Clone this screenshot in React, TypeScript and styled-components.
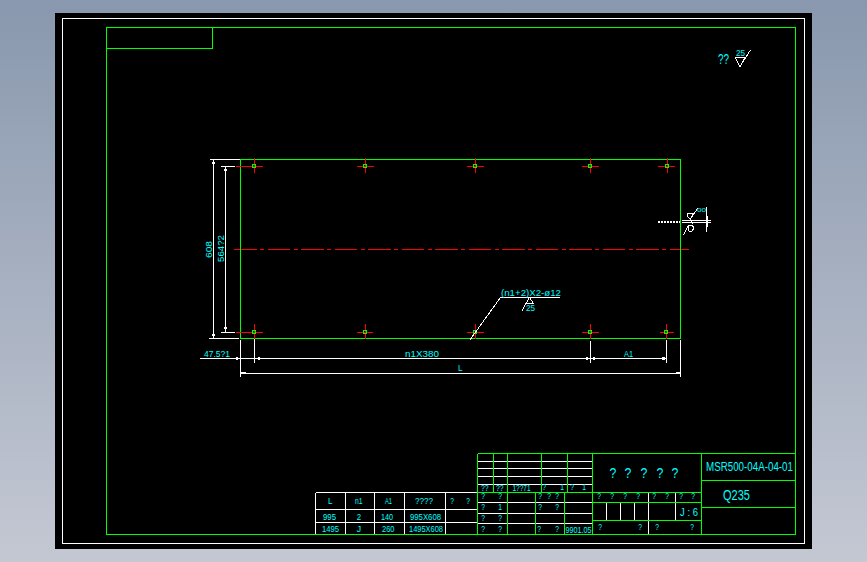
import styled, { createGlobalStyle } from "styled-components";

const GlobalStyle = createGlobalStyle`
  html, body {
    margin: 0;
    padding: 0;
    height: 100%;
  }
  #root {
    height: 100%;
  }
`;

const CYAN = "#00ffff";
const GREEN = "#00ff00";
const WHITE = "#ffffff";
const RED = "#ff0000";

// Grey-blue desktop gradient behind the drawing sheet
const Page = styled.div`
  box-sizing: border-box;
  height: 100%;
  padding: 13px 55px;
  background: linear-gradient(180deg, #8998ae 0%, #c4c8d3 100%);
`;

const Sheet = styled.div`
  width: 757px;
  height: 536px;
  background: #000;
`;

const Drawing = styled.svg`
  display: block;
`;

const Ink = styled.path<{ $c: string; $w?: number }>`
  fill: none;
  stroke: ${(p) => p.$c};
  stroke-width: ${(p) => p.$w ?? 1}px;
  shape-rendering: crispEdges;
`;

const CadText = styled.text`
  fill: ${CYAN};
  font-family: "Liberation Sans", sans-serif;
`;

type LabelProps = {
  x: number;
  y: number;
  t: string;
  w?: number;
  h?: number;
  rotate?: boolean;
};

// x is the left edge when a width is given, otherwise the centre of a single glyph
function Label({ x, y, t, w, h = 6, rotate }: LabelProps) {
  const width = w ?? h * 0.62;
  const left = w ? x : x - width / 2;
  return (
    <CadText
      x={left}
      y={y}
      fontSize={h / 0.72}
      textLength={width}
      lengthAdjust="spacingAndGlyphs"
      transform={rotate ? `rotate(-90 ${x} ${y})` : undefined}
    >
      {t}
    </CadText>
  );
}

const holes = [
  { x: 254, y: 166, l: 18, r: 9 },
  { x: 365, y: 166, l: 8, r: 9 },
  { x: 475, y: 166, l: 8, r: 9 },
  { x: 590, y: 166, l: 8, r: 9 },
  { x: 667, y: 166, l: 9, r: 8 },
  { x: 254, y: 332, l: 18, r: 9 },
  { x: 365, y: 332, l: 8, r: 8 },
  { x: 475, y: 332, l: 8, r: 9 },
  { x: 590, y: 332, l: 8, r: 9 },
  { x: 666, y: 332, l: 6, r: 8 },
];

function Hole({ x, y, l, r }: { x: number; y: number; l: number; r: number }) {
  return (
    <>
      <Ink $c={RED} d={`M${x - l} ${y + 0.5}H${x + r}M${x + 0.5} ${y - 8}V${y + 7}`} />
      <Ink $c={GREEN} d={`M${x - 1.5} ${y - 1.5}h3v3h-3z`} />
    </>
  );
}

// Small question marks of the title block, as x/baseline pairs
const marks: [number, number, string][] = [
  [544, 490, "?"], [562, 490, "1"], [572, 490, "?"], [584, 490, "1"],
  [483, 499, "?"], [500, 499, "?"], [540, 499, "?"], [549, 499, "?"], [557, 499, "?"],
  [483, 510, "?"], [500, 510, "1"], [540, 510, "?"], [557, 510, "?"],
  [483, 521, "?"], [500, 521, "?"],
  [483, 532, "?"], [500, 532, "?"], [539, 532, "?"], [557, 532, "?"],
  [599, 499, "?"], [612, 499, "?"], [625, 499, "?"], [638, 499, "?"],
  [654, 499, "?"], [667, 499, "?"], [681, 499, "?"], [693, 499, "?"],
  [600, 530, "?"], [640, 530, "?"], [657, 530, "?"], [692, 530, "?"],
  [452, 504, "?"], [468, 504, "?"],
];

export default function App() {
  return (
    <Page>
      <GlobalStyle />
      <Sheet>
        <Drawing width={757} height={536} viewBox="55 13 757 536">
          {/* sheet frames */}
          <Ink $c={WHITE} d="M62.5 18.5H804.5V543.5H62.5Z" />
          <Ink $c={GREEN} d="M106.5 27.5H795.5V534.5H106.5Z M106.5 48.5H212.5V27.5" />

          {/* centre line */}
          <Ink $c={RED} strokeDasharray="22.5 3.5 4 3.5" d="M234 249.5H689" />

          {/* dimension lines */}
          <Ink
            $c={WHITE}
            d="M210 159.5H240 M213.5 159.5V338 M209 338.5H239 M221 166.5H235 M221 332.5H235 M225.5 166.5V332
               M200 358.5H666.5 M254.5 336V362.5 M590.5 341V362.5 M666.5 340V362.5
               M240.5 340V376.5 M680.5 340V376.5 M240.5 373.5H680.5"
          />
          <Ink
            $c={WHITE}
            d="M212 162.5h3 M212 163.5h3 M224 169.5h3 M224 170.5h3 M212 334.5h3 M212 335.5h3 M224 327.5h3 M224 328.5h3
               M236 357.5h2 M236 359.5h2 M258 357.5h2 M258 359.5h2 M586 357.5h2 M586 359.5h2
               M593 357.5h2 M593 359.5h2 M662 357.5h3 M662 359.5h3 M241 372.5h5 M676 372.5h4"
          />

          {/* main plate */}
          <Ink $c={GREEN} d="M240.5 159.5H680.5V338.5H240.5Z" />
          {holes.map((h) => (
            <Hole key={`${h.x}-${h.y}`} {...h} />
          ))}

          {/* hole leader with roughness mark */}
          <Ink $c={WHITE} d="M469.5 340.5L500.5 297.5H560 M529.5 297.5L526 303.5H533.5Z M526 303.5L522 311" />
          <Label x={501} y={296} w={60} h={6} t="(n1+2)X2-ø12" />
          <Label x={526} y={311} w={9} h={6} t="25" />

          {/* weld symbol */}
          <Ink $c={WHITE} $w={2} strokeDasharray="2 1" d="M658 221.5H680" />
          <Ink
            $c={WHITE}
            d="M682 220.5H710.5 M682 222.5H710.5 M706.5 207V232 M707.5 216V227
               M697.5 208.5L691 218 M690 218.5L693 224 M683.5 235L688.5 225
               M688 213h4l1 3l-3 3l-3 -3z M689 225h3l2 3l-2 3h-3l-1 -3z"
          />
          <Label x={697} y={212} w={9} h={4} t="00" />

          {/* surface finish, top right */}
          <Label x={718} y={64} w={11} h={10} t="??" />
          <Label x={736} y={56} w={9} h={6} t="25" />
          <Ink $c={WHITE} d="M735 57.5H745 M735 57.5L740 66.5L750.5 50 M745 57.5L740 66.5" />

          {/* dimension texts */}
          <Label x={204} y={357} w={26} h={6} t="47.5?1" />
          <Label x={405} y={357} w={34} h={6} t="n1X380" />
          <Label x={624} y={357} w={9} h={6} t="A1" />
          <Label x={458} y={371} w={4.5} h={6} t="L" />
          <Label x={212} y={258} w={17} h={6} rotate t="608" />
          <Label x={224} y={262} w={27} h={6} rotate t="564?2" />

          {/* parameter table */}
          <Ink
            $c={WHITE}
            d="M315.5 492.5H477 M315.5 509.5H477 M315.5 522.5H477
               M315.5 492.5V534 M345.5 492.5V534 M374.5 492.5V534 M404.5 492.5V534 M445.5 492.5V534"
          />
          <Label x={328} y={504} w={4.5} h={6} t="L" />
          <Label x={355} y={504} w={7.5} h={6} t="n1" />
          <Label x={385} y={504} w={7} h={6} t="A1" />
          <Label x={415} y={504} w={18} h={6} t="????" />
          <Label x={323} y={520} w={13} h={7} t="995" />
          <Label x={359} y={520} h={7} t="2" />
          <Label x={381} y={520} w={12} h={7} t="140" />
          <Label x={410} y={520} w={31} h={7} t="995X608" />
          <Label x={322} y={532} w={17} h={7} t="1495" />
          <Label x={359} y={532} h={7} t="J" />
          <Label x={382} y={532} w={12.5} h={7} t="260" />
          <Label x={409} y={532} w={34} h={7} t="1495X608" />

          {/* title block, white rows first so the green rules sit on top */}
          <Ink
            $c={WHITE}
            d="M477 461.5H592 M477 468.5H592 M477 476.5H592 M477 484.5H592
               M477 502.5H592 M477 513.5H592 M477 523.5H592
               M606.5 502V520 M620.5 502V520 M634.5 502V520 M648.5 492V534 M675.5 492V520"
          />
          <Ink
            $c={GREEN}
            d="M477.5 453.5H795.5 M477.5 453.5V534.5 M477.5 492.5H701.5
               M493.5 453.5V492 M507.5 453.5V534 M541.5 453.5V492 M567.5 453.5V492
               M535.5 492.5V534 M564.5 492.5V534 M592.5 453.5V534 M701.5 453.5V534
               M592.5 502.5H701.5 M592.5 520.5H701.5 M701.5 480.5H795.5 M701.5 507.5H795.5"
          />
          <Label x={481} y={491} w={7.5} h={6} t="??" />
          <Label x={496} y={491} w={7.5} h={6} t="??" />
          <Label x={512.5} y={491} w={18} h={6} t="1??71" />
          {marks.map(([x, y, t]) => (
            <Label key={`${x}-${y}`} x={x} y={y} t={t} />
          ))}
          <Label x={565.5} y={533} w={26} h={7} t="9901.05" />
          <Label x={613} y={478} h={11} t="?" />
          <Label x={628} y={478} h={11} t="?" />
          <Label x={644} y={478} h={11} t="?" />
          <Label x={660} y={478} h={11} t="?" />
          <Label x={675} y={478} h={11} t="?" />
          <Label x={680} y={516} w={18} h={8} t="J : 6" />
          <Label x={706} y={471} w={87} h={9} t="MSR500-04A-04-01" />
          <Label x={723} y={499.5} w={27} h={10} t="Q235" />
        </Drawing>
      </Sheet>
    </Page>
  );
}
